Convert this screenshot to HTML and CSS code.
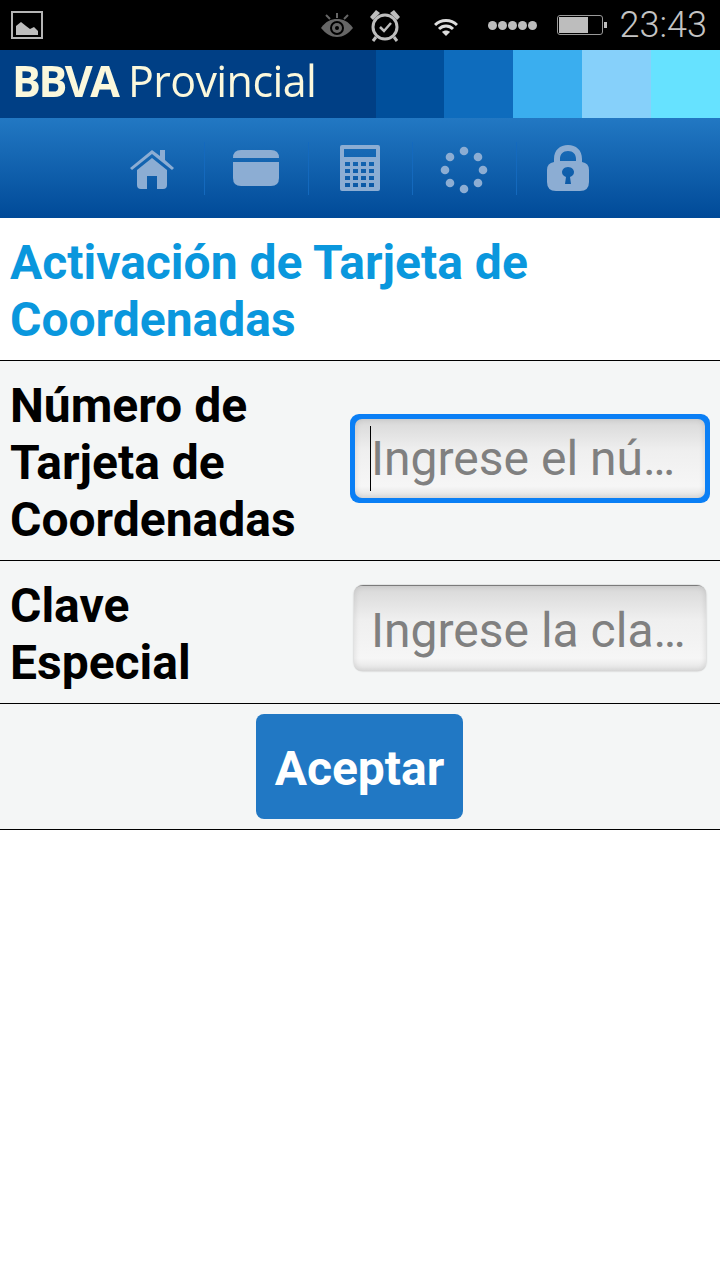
FILE: index.html
```html
<!DOCTYPE html>
<html lang="es">

<head>
    <meta charset="UTF-8">
    <meta name="viewport" content="width=device-width, initial-scale=1.0">
    <title>BBVA Provincial</title>
    <link rel="stylesheet" href="styles.css">
</head>

<body>
    <div class="status-bar">
        <svg class="st-image" width="32" height="28" viewBox="0 0 32 28">
            <rect x="1" y="1" width="30" height="26" fill="none" stroke="#b5b5b5" stroke-width="2" />
            <path d="M5 24V15L10 11L15 15L19 18L23 16L27 20V24Z" fill="#bdbdbd" />
        </svg>
        <div class="status-right">
            <svg class="st-eye" width="32" height="24" viewBox="0 0 32 24">
                <path d="M0 15C5 8 10 6 16 6C22 6 27 8 32 15C27 21 22 24 16 24C10 24 5 21 0 15Z" fill="#666" />
                <circle cx="16" cy="15" r="7" fill="#000" />
                <circle cx="16" cy="15" r="5" fill="#666" />
                <circle cx="16" cy="15" r="2" fill="#000" />
                <path d="M16 0V5M5 2L9 6M27 2L23 6" stroke="#666" stroke-width="2" />
            </svg>
            <svg class="st-alarm" width="32" height="33" viewBox="0 0 32 33">
                <circle cx="16" cy="18" r="12" fill="none" stroke="#bdbdbd" stroke-width="3" />
                <path d="M1 8L7 1L11 4L4 11ZM31 8L25 1L21 4L28 11Z" fill="#bdbdbd" />
                <path d="M11 18L15 22L22 14" fill="none" stroke="#bdbdbd" stroke-width="2.5" />
                <path d="M7 28L4 32M25 28L28 32" stroke="#bdbdbd" stroke-width="3" />
            </svg>
            <svg class="st-wifi" width="24" height="20" viewBox="0 0 24 20">
                <path d="M1 7C7 1 17 1 23 7" fill="none" stroke="#ddd" stroke-width="3" />
                <path d="M5 11C9 7 15 7 19 11" fill="none" stroke="#ddd" stroke-width="3" />
                <path d="M8 14C10 12 14 12 16 14L12 18Z" fill="#ddd" />
            </svg>
            <div class="st-signal"><i></i><i></i><i></i><i></i><i></i></div>
            <div class="st-battery"><div class="st-charge"></div></div>
            <span class="st-time">23:43</span>
        </div>
    </div>

    <div class="brand-bar">
        <div class="logo"><b>BBVA</b> Provincial</div>
        <div class="stripes">
            <div class="stripe s1"></div>
            <div class="stripe s2"></div>
            <div class="stripe s3"></div>
            <div class="stripe s4"></div>
            <div class="stripe s5"></div>
        </div>
    </div>

    <div class="nav">
        <div class="nav-item">
            <svg width="46" height="41" viewBox="0 0 46 41">
                <path d="M1 20L23 2L31 8V2H36V12L45 20L43 22L23 6L3 22Z" />
                <path d="M8 22L23 10L38 22V37Q38 41 34 41H28V28H18V41H12Q8 41 8 37Z" />
            </svg>
        </div>
        <div class="nav-item">
            <svg width="46" height="36" viewBox="0 0 46 36">
                <path d="M0 8Q0 0 8 0H38Q46 0 46 8H0Z" />
                <path d="M0 12H46V28Q46 36 38 36H8Q0 36 0 28Z" />
            </svg>
        </div>
        <div class="nav-item">
            <svg width="40" height="46" viewBox="0 0 40 46">
                <path fill-rule="evenodd" d="M2 0H38Q40 0 40 2V44Q40 46 38 46H2Q0 46 0 44V2Q0 0 2 0ZM4 4V12H36V4ZM5 17V21H10V17ZM13 17V21H18V17ZM21 17V21H26V17ZM29 17V21H34V17ZM5 24V28H10V24ZM13 24V28H18V24ZM21 24V28H26V24ZM29 24V28H34V24ZM5 31V35H10V31ZM13 31V35H18V31ZM21 31V35H26V31ZM29 31V35H34V31ZM5 38V42H10V38ZM13 38V42H18V38ZM21 38V42H26V38ZM29 38V42H34V38Z" />
            </svg>
        </div>
        <div class="nav-item">
            <svg class="nav-dots" width="48" height="48" viewBox="0 0 48 48">
                <circle cx="24" cy="5" r="4.3" />
                <circle cx="38" cy="11" r="4.3" />
                <circle cx="43" cy="24" r="4.3" />
                <circle cx="38" cy="37" r="4.3" />
                <circle cx="24" cy="43" r="4.3" />
                <circle cx="10" cy="37" r="4.3" />
                <circle cx="5" cy="24" r="4.3" />
                <circle cx="10" cy="11" r="4.3" />
            </svg>
        </div>
        <div class="nav-item">
            <svg width="42" height="46" viewBox="0 0 42 46">
                <path fill-rule="evenodd" d="M7 17V14C7 5 13 0 21 0C29 0 35 5 35 14V17Q42 18 42 25V37Q42 46 33 46H9Q0 46 0 37V25Q0 18 7 17ZM13 16H29V14C29 9 26 6 21 6C16 6 13 9 13 14ZM21 22C17 22 15 25 15 27C15 30 17 31 19 32L18 39H24L23 32C25 31 27 30 27 27C27 25 25 22 21 22Z" />
            </svg>
        </div>
    </div>

    <h1 class="page-title">Activación de Tarjeta de Coordenadas</h1>

    <div class="form">
        <div class="form-row">
            <label class="field-label" for="numero">Número de Tarjeta de Coordenadas</label>
            <div class="field-focus">
                <input class="field-input" id="numero" type="text" placeholder="Ingrese el nú…">
                <span class="caret"></span>
            </div>
        </div>
        <div class="form-row">
            <label class="field-label" for="clave">Clave Especial</label>
            <div class="field-plain">
                <input class="field-input" id="clave" type="text" placeholder="Ingrese la cla…">
            </div>
        </div>
        <div class="form-actions">
            <button class="btn-accept">Aceptar</button>
        </div>
    </div>
</body>

</html>
```

FILE: styles.css
```css
* {
    box-sizing: border-box;
    margin: 0;
    padding: 0;
}

body {
    background: white;
    font-family: Roboto, sans-serif;
    min-height: 100vh;
}

svg {
    display: block;
}

/* status bar */
.status-bar {
    height: 50px;
    background: black;
    display: flex;
    align-items: center;
    justify-content: space-between;
    padding: 0 13px 0 11px;
}

.status-right {
    display: flex;
    align-items: center;
}

.st-alarm {
    margin-left: 16px;
}

.st-wifi {
    margin-left: 33px;
    margin-top: 6px;
}

.st-signal {
    display: flex;
    gap: 1px;
    margin-left: 30px;
}

.st-signal i {
    width: 9px;
    height: 9px;
    border-radius: 50%;
    background: #bdbdbd;
}

.st-battery {
    position: relative;
    width: 46px;
    height: 20px;
    border: 1px solid #999;
    border-radius: 3px;
    margin-left: 20px;
    padding: 1px;
}

.st-battery::after {
    content: "";
    position: absolute;
    right: -5px;
    top: 6px;
    width: 3px;
    height: 6px;
    background: #bdbdbd;
}

.st-charge {
    width: 29px;
    height: 100%;
    background: #bdbdbd;
}

.st-time {
    color: #c4c4c4;
    font-size: 36px;
    font-weight: 300;
    margin-left: 17px;
}

/* brand */
.brand-bar {
    height: 68px;
    background: #003f85;
    display: flex;
    justify-content: space-between;
}

.logo {
    color: #fbf8dc;
    font-family: "Open Sans", sans-serif;
    font-weight: 400;
    font-size: 43px;
    line-height: 62px;
    padding-left: 12px;
    letter-spacing: -0.6px;
    white-space: nowrap;
    filter: blur(0.5px);
}

.logo b {
    font-weight: 700;
    letter-spacing: -2.5px;
}

.stripes {
    display: flex;
}

.stripe {
    width: 69px;
}

.s1 { background: #004f9b; width: 68px; }
.s2 { background: #0e6cbd; }
.s3 { background: #3aaeef; }
.s4 { background: #86d0fa; }
.s5 { background: #66e2ff; }

/* icon nav */
.nav {
    height: 100px;
    padding-left: 2px;
    background: linear-gradient(#2278c3, #004a98);
    display: flex;
    justify-content: center;
    align-items: center;
}

.nav-item {
    width: 104px;
    height: 53px;
    padding-right: 2px;
    display: flex;
    align-items: center;
    justify-content: center;
    border-right: 1px solid #1469bd;
}

.nav-item:last-child {
    border-right: none;
}

.nav-item svg {
    fill: #8cadd3;
    filter: blur(0.6px);
}

.nav-item .nav-dots {
    margin-top: 4px;
}

/* content */
.page-title {
    color: #0a97dd;
    font-size: 48px;
    line-height: 57px;
    font-weight: 700;
    padding: 16px 10px 12px;
    border-bottom: 1px solid black;
}

.form {
    background: #f4f6f6;
}

.form-row {
    display: flex;
    align-items: center;
    justify-content: space-between;
    padding: 16px 10px 12px;
    border-bottom: 1px solid black;
}

.field-label {
    width: 300px;
    color: black;
    font-size: 48px;
    line-height: 57px;
    font-weight: 700;
}

.field-focus,
.field-plain {
    position: relative;
    border-radius: 9px;
    flex-shrink: 0;
}

.field-focus {
    width: 360px;
    height: 89px;
    margin-bottom: 9px;
    padding: 5px;
    background: #0a7ff5;
}

.field-plain {
    width: 352px;
    height: 85px;
    margin-right: 4px;
    margin-bottom: 11px;
    box-shadow: 0 -2px 1px -1px #707070, 0 0 2px #aaa;
}

.field-input {
    display: block;
    width: 100%;
    height: 100%;
    border: none;
    border-radius: 7px;
    outline: none;
    background: linear-gradient(#d8d8d8, #efefef 40%, #f6f6f6 85%, #e2e2e2);
    box-shadow: inset 0 0 6px rgba(0, 0, 0, 0.12);
    font-family: Roboto, sans-serif;
    font-size: 48px;
    padding: 3px 17px 0;
}

.field-input::placeholder {
    color: #808080;
    opacity: 1;
}

.field-focus .field-input {
    padding: 0 16px;
}

.caret {
    position: absolute;
    left: 20px;
    top: 12px;
    width: 1px;
    height: 65px;
    background: black;
}

.form-actions {
    display: flex;
    justify-content: center;
    padding: 10px 0;
    border-bottom: 1px solid black;
}

.btn-accept {
    width: 207px;
    height: 105px;
    margin-left: -1px;
    padding-top: 3px;
    background: #2178c4;
    color: white;
    border: none;
    border-radius: 8px;
    font-family: Roboto, sans-serif;
    font-size: 48px;
    font-weight: 700;
}
```
